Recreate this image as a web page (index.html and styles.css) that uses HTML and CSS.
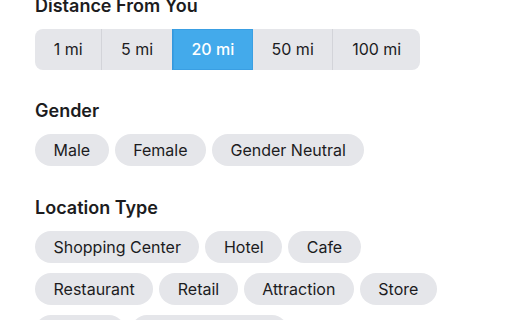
FILE: index.html
```html
<!DOCTYPE html>
<html>
<head>
<meta charset="utf-8">
<link rel="stylesheet" href="styles.css">
</head>
<body>
<div class="filters">
  <section class="section section-first">
    <h2 class="heading">Distance From You</h2>
    <div class="segmented">
      <span class="seg">1 mi</span>
      <span class="seg">5 mi</span>
      <span class="seg seg-active">20 mi</span>
      <span class="seg">50 mi</span>
      <span class="seg">100 mi</span>
    </div>
  </section>
  <section class="section">
    <h2 class="heading">Gender</h2>
    <div class="chips">
      <span class="chip">Male</span>
      <span class="chip">Female</span>
      <span class="chip">Gender Neutral</span>
    </div>
  </section>
  <section class="section section-loc">
    <h2 class="heading">Location Type</h2>
    <div class="chips">
      <span class="chip">Shopping Center</span>
      <span class="chip">Hotel</span>
      <span class="chip">Cafe</span>
      <span class="chip">Restaurant</span>
      <span class="chip">Retail</span>
      <span class="chip">Attraction</span>
      <span class="chip">Store</span>
      <span class="chip">Gallery</span>
      <span class="chip">Convention Hall</span>
    </div>
  </section>
</div>
</body>
</html>
```

FILE: styles.css
```css
html, body {
  margin: 0;
  padding: 0;
  background: #ffffff;
}
body {
  font-family: Inter, "Liberation Sans", sans-serif;
  color: #1d1d1f;
  overflow: hidden;
}
.filters {
  padding: 0 35px;
}
.section {
  margin-top: 30px;
}
.section-first {
  margin-top: -5px;
}
.section-loc {
  margin-top: 31px;
}
.heading {
  margin: 0 0 12px 0;
  font-size: 18px;
  line-height: 22px;
  font-weight: 600;
  color: #1c1c1e;
}
.segmented {
  display: inline-flex;
  background: #e5e6ea;
  border-radius: 8px;
  overflow: hidden;
}
.seg {
  display: block;
  height: 41px;
  line-height: 41px;
  padding: 0 18.7px;
  font-size: 16px;
  color: #1c1c1e;
  border-left: 1px solid #d3d4d9;
}
.seg:first-child {
  border-left: none;
}
.seg-active {
  background: #43aaeb;
  color: #ffffff;
  font-weight: 500;
  border-left: 1px solid #3598dc;
  box-shadow: inset 0 0 0 1px #3a9fe3;
}
.seg-active + .seg {
  border-left: none;
}
.chips {
  display: flex;
  flex-wrap: wrap;
  gap: 10px 6px;
}
.chip {
  display: block;
  height: 32px;
  line-height: 32px;
  padding: 0 18.5px;
  border-radius: 16px;
  background: #e5e6ea;
  font-size: 16px;
  color: #1c1c1e;
}
```
